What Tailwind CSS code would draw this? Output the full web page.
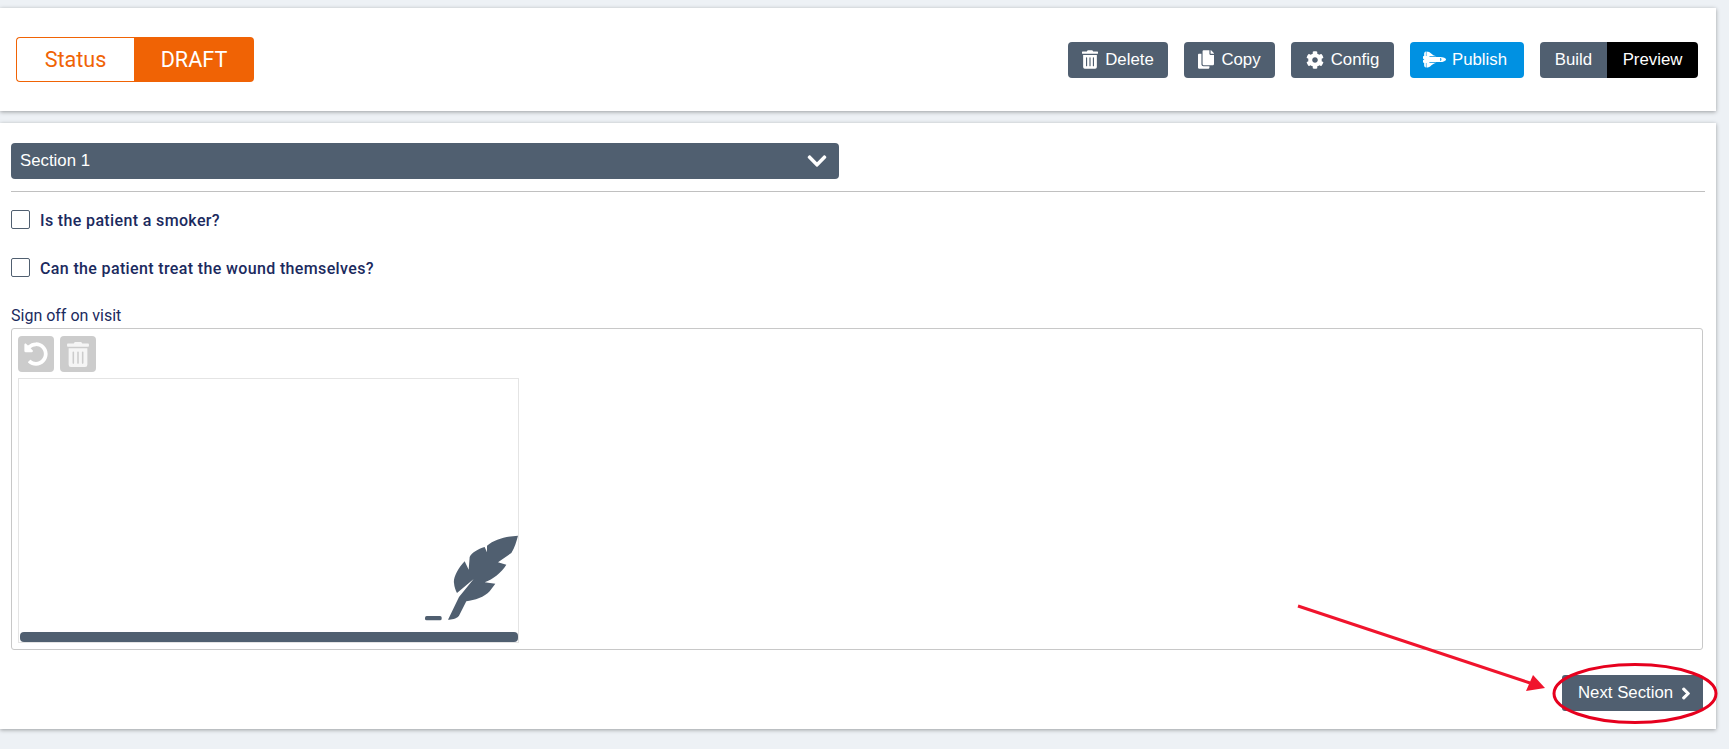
<!DOCTYPE html>
<html lang="en">
<head>
  <meta charset="UTF-8">
  <meta name="viewport" content="width=device-width, initial-scale=1.0">
  <title>Form Preview</title>
  <script src="https://cdn.jsdelivr.net/npm/@tailwindcss/browser@4"></script>
</head>
<body class="bg-[#edf1f5] h-[749px] overflow-hidden relative font-['Roboto',sans-serif]">
  <div class="pt-2 w-[1716px] flex flex-col gap-3">

    <!-- top bar -->
    <div class="bg-white h-[103px] shadow-[0_1px_4px_rgba(0,0,0,0.35)] flex items-center justify-between pl-4 pr-[18px]">
      <div class="flex h-[45px] w-[238px] rounded text-[21.6px] leading-none">
        <div class="w-[118px] flex items-center justify-center border border-r-0 border-[#f06305] rounded-l text-[#f06305] bg-white">Status</div>
        <div class="w-[120px] flex items-center justify-center bg-[#f06305] rounded-r text-white">DRAFT</div>
      </div>
      <div class="flex gap-4 font-['Liberation_Sans',sans-serif] text-[16.8px] text-white">
        <button class="h-9 w-[100px] bg-[#505f70] rounded flex items-center justify-center gap-[7px]">
          <svg class="w-4 h-[19px]" viewBox="0 0 448 512" fill="currentColor"><path d="M32 464a48 48 0 0 0 48 48h288a48 48 0 0 0 48-48V128H32zm272-256a16 16 0 0 1 32 0v224a16 16 0 0 1-32 0zm-96 0a16 16 0 0 1 32 0v224a16 16 0 0 1-32 0zm-96 0a16 16 0 0 1 32 0v224a16 16 0 0 1-32 0zM432 32H312l-9.4-18.7A24 24 0 0 0 281.1 0H166.8a23.72 23.72 0 0 0-21.4 13.3L136 32H16A16 16 0 0 0 0 48v32a16 16 0 0 0 16 16h416a16 16 0 0 0 16-16V48a16 16 0 0 0-16-16z"/></svg>
          Delete
        </button>
        <button class="h-9 w-[91px] bg-[#505f70] rounded flex items-center justify-center gap-[7px]">
          <svg class="w-4 h-[19px]" viewBox="0 0 448 512" fill="currentColor"><path d="M320 448v40c0 13.255-10.745 24-24 24H24c-13.255 0-24-10.745-24-24V120c0-13.255 10.745-24 24-24h72v296c0 30.879 25.121 56 56 56h168zm0-344V0H152c-13.255 0-24 10.745-24 24v368c0 13.255 10.745 24 24 24h272c13.255 0 24-10.745 24-24V128H344c-13.2 0-24-10.8-24-24zm120.971-31.029L375.029 7.029A24 24 0 0 0 358.059 0H352v96h96v-6.059a24 24 0 0 0-7.029-16.97z"/></svg>
          Copy
        </button>
        <button class="h-9 w-[103px] bg-[#505f70] rounded flex items-center justify-center gap-[7px]">
          <svg class="w-[18px] h-[18px]" viewBox="0 0 512 512" fill="currentColor"><path d="M487.4 315.7l-42.6-24.6c4.3-23.2 4.3-47 0-70.2l42.6-24.6c4.9-2.8 7.1-8.6 5.5-14-11.1-35.6-30-67.8-54.7-94.6-3.8-4.1-10-5.1-14.8-2.3L380.8 110c-17.9-15.4-38.5-27.3-60.8-35.1V25.8c0-5.6-3.9-10.5-9.4-11.7-36.7-8.2-74.3-7.8-109.2 0-5.5 1.2-9.4 6.1-9.4 11.7V75c-22.2 7.9-42.8 19.8-60.8 35.1L88.7 85.5c-4.9-2.8-11-1.9-14.8 2.3-24.7 26.7-43.6 58.9-54.7 94.6-1.7 5.4.6 11.2 5.5 14L67.3 221c-4.3 23.2-4.3 47 0 70.2l-42.6 24.6c-4.9 2.8-7.1 8.6-5.5 14 11.1 35.6 30 67.8 54.7 94.6 3.8 4.1 10 5.1 14.8 2.3l42.6-24.6c17.9 15.4 38.5 27.3 60.8 35.1v49.2c0 5.6 3.9 10.5 9.4 11.7 36.7 8.2 74.3 7.8 109.2 0 5.5-1.2 9.4-6.1 9.4-11.7v-49.2c22.2-7.9 42.8-19.8 60.8-35.1l42.6 24.6c4.9 2.8 11 1.9 14.8-2.3 24.7-26.7 43.6-58.9 54.7-94.6 1.5-5.5-.7-11.3-5.6-14.1zM256 336c-44.1 0-80-35.9-80-80s35.9-80 80-80 80 35.9 80 80-35.9 80-80 80z"/></svg>
          Config
        </button>
        <button class="h-9 w-[114px] bg-[#0091e2] rounded flex items-center pl-[13px] gap-[6px]">
          <svg class="w-[23px] h-[19px]" viewBox="0 0 640 512" fill="currentColor"><path d="M592.604 208.244C559.735 192.836 515.777 184 472 184H186.327c-4.952-6.555-10.585-11.978-16.72-16H376C229.157 137.747 219.403 32 96.003 32H96v128H80V32c-26.51 0-48 28.654-48 64v64c-23.197 0-32 10.032-32 24v40c0 13.983 8.819 24 32 24v16c-23.197 0-32 10.032-32 24v40c0 13.983 8.819 24 32 24v64c0 35.346 21.49 64 48 64V352h16v128h.003c123.4 0 133.154-105.747 279.997-136H169.606c6.135-4.022 11.768-9.445 16.72-16H472c43.777 0 87.735-8.836 120.604-24.244C622.282 289.845 640 271.992 640 256s-17.718-33.845-47.396-47.756zM488 296a8 8 0 0 1-8-8v-64a8 8 0 0 1 8-8c31.909 0 31.942 80 0 80z"/></svg>
          Publish
        </button>
        <div class="flex h-9 rounded overflow-hidden">
          <button class="w-[67px] bg-[#505f70]">Build</button>
          <button class="w-[91px] bg-black">Preview</button>
        </div>
      </div>
    </div>

    <!-- form card -->
    <div class="bg-white h-[606px] shadow-[0_1px_4px_rgba(0,0,0,0.35)] pl-[11px] pr-[11px] pt-5">
      <div class="w-[828px] h-9 bg-[#505f70] rounded flex items-center justify-between pl-[9px] pr-[11px] text-white font-['Liberation_Sans',sans-serif] text-[16.8px]">
        Section 1
        <svg class="w-[22px] h-[22px]" viewBox="0 0 448 512" fill="currentColor"><path d="M207.029 381.476L12.686 187.132c-9.373-9.373-9.373-24.569 0-33.941l22.667-22.667c9.357-9.357 24.522-9.375 33.901-.04L224 284.505l154.745-154.021c9.379-9.335 24.544-9.317 33.901.04l22.667 22.667c9.373 9.373 9.373 24.569 0 33.941L240.971 381.476c-9.373 9.372-24.569 9.372-33.942 0z"/></svg>
      </div>
      <div class="mt-3 border-t border-[#c0c0c0]"></div>

      <label class="mt-[18px] flex items-center gap-[10px] h-[19px] text-base tracking-[0.36px] font-medium text-[#1b2a5e]">
        <span class="w-[19px] h-[19px] border border-[#505f70] rounded-[2px]"></span>
        <span class="pt-[2px]">Is the patient a smoker?</span>
      </label>
      <label class="mt-[29px] flex items-center gap-[10px] h-[19px] text-base tracking-[0.36px] font-medium text-[#1b2a5e]">
        <span class="w-[19px] h-[19px] border border-[#505f70] rounded-[2px]"></span>
        <span class="pt-[2px]">Can the patient treat the wound themselves?</span>
      </label>

      <div class="mt-[29px] h-[20px] flex items-center text-base text-[#1b2a5e]">Sign off on visit</div>
      <div class="mt-[2px] mr-[2px] h-[322px] border border-[#c8c8c8] rounded-[3px] pl-[6px] pt-[7px]">
        <div class="flex gap-[6px]">
          <div class="w-9 h-9 bg-[#cccccc] rounded-[4px] flex items-center justify-center text-white">
            <svg class="w-6 h-6" viewBox="0 0 512 512" fill="currentColor"><path d="M255.545 8c-66.269.119-126.438 26.233-170.86 68.685L48.971 40.971C33.851 25.851 8 36.559 8 57.941V192c0 13.255 10.745 24 24 24h134.059c21.382 0 32.09-25.851 16.971-40.971l-41.75-41.75c30.864-28.899 70.801-44.907 113.23-45.273 92.398-.798 170.283 73.977 169.484 169.442C423.236 348.009 349.816 424 256 424c-41.127 0-79.997-14.678-110.63-41.556-4.743-4.161-11.906-3.908-16.368.553L89.34 422.659c-4.872 4.872-4.631 12.815.482 17.433C133.798 479.813 192.074 504 256 504c136.966 0 247.999-111.033 248-247.998C504.001 119.193 392.354 7.755 255.545 8z"/></svg>
          </div>
          <div class="w-9 h-9 bg-[#cccccc] rounded-[4px] flex items-center justify-center text-[#f5f5f5]">
            <svg class="w-[22px] h-[25px]" viewBox="0 0 448 512" fill="currentColor"><path d="M32 464a48 48 0 0 0 48 48h288a48 48 0 0 0 48-48V128H32zm272-256a16 16 0 0 1 32 0v224a16 16 0 0 1-32 0zm-96 0a16 16 0 0 1 32 0v224a16 16 0 0 1-32 0zm-96 0a16 16 0 0 1 32 0v224a16 16 0 0 1-32 0zM432 32H312l-9.4-18.7A24 24 0 0 0 281.1 0H166.8a23.72 23.72 0 0 0-21.4 13.3L136 32H16A16 16 0 0 0 0 48v32a16 16 0 0 0 16 16h416a16 16 0 0 0 16-16V48a16 16 0 0 0-16-16z"/></svg>
          </div>
        </div>
        <!-- signature pad -->
        <div class="relative mt-[6px] w-[501px] h-[265px] border border-[#e4e4e4]">
          <svg class="absolute right-0 bottom-[19px] w-[95px] h-[90px]" viewBox="70 70 285 270" fill="#505f70">
            <path d="M355 78 C320 80 285 88 262 108 L262 128 L255 112 C235 118 215 130 210 142 L207 180 L195 155 C175 175 160 205 163 220 C164 232 168 243 172 250 L222 208 L178 262 L145 330 C155 330 170 328 178 318 L200 275 C225 272 255 262 270 245 L287 222 L255 218 C280 208 305 190 320 165 L295 158 L335 130 C345 115 350 95 355 78 Z"/>
            <rect x="76" y="319" width="50" height="13" rx="5"/>
          </svg>
          <div class="absolute left-[1px] right-0 bottom-0 h-[10px] bg-[#505f70] rounded-[4px]"></div>
        </div>
      </div>

      <div class="flex justify-end mr-[2px] mt-[25px]">
        <button class="h-9 w-[141px] bg-[#505f70] rounded-[3px] flex items-center pl-4 gap-2 text-white text-[16.8px] font-['Liberation_Sans',sans-serif]">
          Next Section
          <svg class="w-[10px] h-[13px]" viewBox="0 0 320 512" fill="currentColor" stroke="currentColor" stroke-width="40"><path d="M285.476 272.971L91.132 467.314c-9.373 9.373-24.569 9.373-33.941 0l-22.667-22.667c-9.357-9.357-9.375-24.522-.04-33.901L188.505 256 34.484 101.255c-9.335-9.379-9.317-24.544.04-33.901l22.667-22.667c9.373-9.373 24.569-9.373 33.941 0L285.475 239.03c9.373 9.372 9.373 24.568.001 33.941z"/></svg>
        </button>
      </div>
    </div>
  </div>

  <!-- red annotation drawn over the screenshot -->
  <svg class="absolute left-0 top-0 w-[1729px] h-[749px] pointer-events-none" viewBox="0 0 1729 749" fill="none">
    <line x1="1298" y1="606" x2="1530" y2="683" stroke="#f0142d" stroke-width="3"/>
    <polygon points="1545,688 1526,691 1533,675" fill="#f0142d"/>
    <ellipse cx="1635" cy="693.5" rx="81" ry="29" stroke="#e6001e" stroke-width="3"/>
  </svg>
</body>
</html>
